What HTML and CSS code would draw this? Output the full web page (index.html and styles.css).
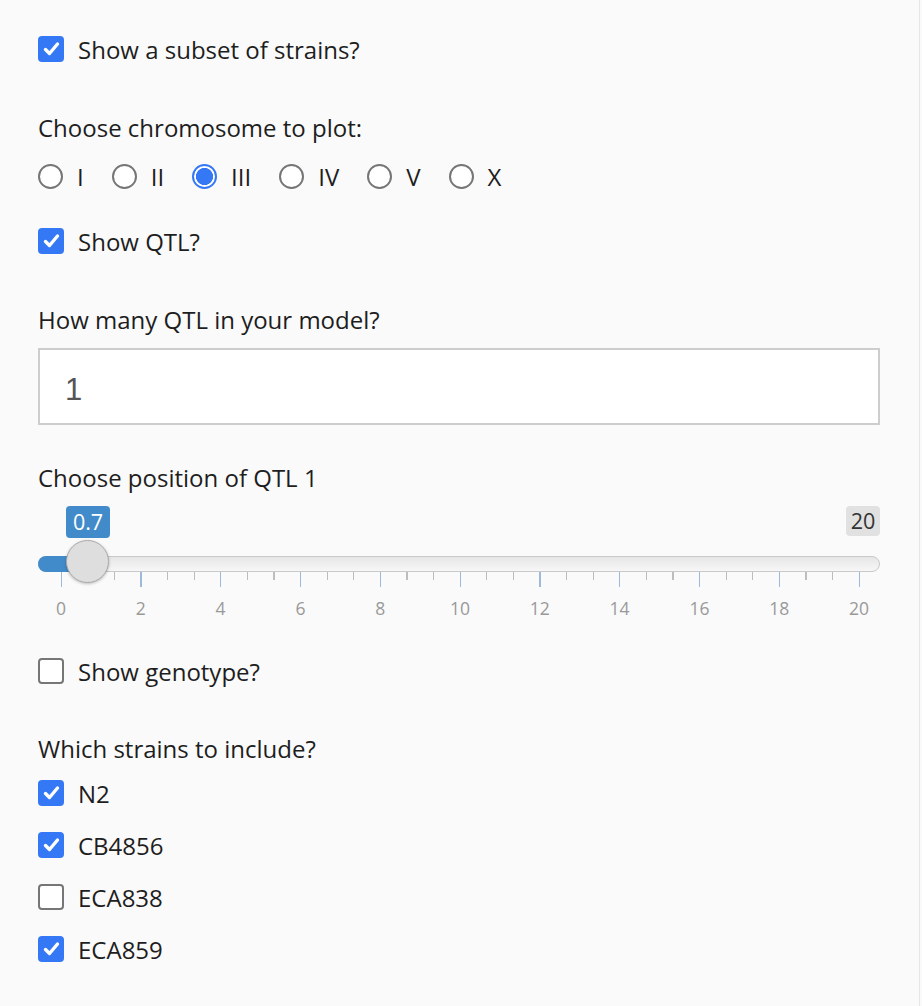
FILE: index.html
```html
<!DOCTYPE html>
<html>
<head>
<meta charset="utf-8">
<title>QTL controls</title>
<link rel="stylesheet" href="styles.css">
</head>
<body>
<div class="panel">
  <label class="check first">
    <span class="box on"><svg viewBox="0 0 26 26" width="26" height="26"><path d="M7.5 13.5 L11.5 17.5 L19.5 8" fill="none" stroke="#fff" stroke-width="3.4" stroke-linecap="round" stroke-linejoin="round"/></svg></span>
    <span class="txt">Show a subset of strains?</span>
  </label>

  <div class="label chrom">Choose chromosome to plot:</div>
  <div class="radios">
    <label class="radio"><span class="circle"></span><span class="txt">I</span></label>
    <label class="radio"><span class="circle"></span><span class="txt">II</span></label>
    <label class="radio"><span class="circle on"></span><span class="txt">III</span></label>
    <label class="radio"><span class="circle"></span><span class="txt">IV</span></label>
    <label class="radio"><span class="circle"></span><span class="txt">V</span></label>
    <label class="radio"><span class="circle"></span><span class="txt">X</span></label>
  </div>

  <label class="check qtl">
    <span class="box on"><svg viewBox="0 0 26 26" width="26" height="26"><path d="M7.5 13.5 L11.5 17.5 L19.5 8" fill="none" stroke="#fff" stroke-width="3.4" stroke-linecap="round" stroke-linejoin="round"/></svg></span>
    <span class="txt">Show QTL?</span>
  </label>

  <div class="label howmany">How many QTL in your model?</div>
  <div class="numinput">1</div>

  <div class="label position">Choose position of QTL 1</div>
  <div class="slider">
    <span class="badge from">0.7</span>
    <span class="badge max">20</span>
    <div class="track"></div>
    <div class="bar"></div>
    <div class="grid">
      <span class="tick major" style="left:22.5px"></span>
      <span class="tick minor" style="left:49.1px"></span>
      <span class="tick minor" style="left:75.7px"></span>
      <span class="tick major" style="left:102.3px"></span>
      <span class="tick minor" style="left:128.9px"></span>
      <span class="tick minor" style="left:155.5px"></span>
      <span class="tick major" style="left:182.1px"></span>
      <span class="tick minor" style="left:208.7px"></span>
      <span class="tick minor" style="left:235.3px"></span>
      <span class="tick major" style="left:261.9px"></span>
      <span class="tick minor" style="left:288.5px"></span>
      <span class="tick minor" style="left:315.1px"></span>
      <span class="tick major" style="left:341.7px"></span>
      <span class="tick minor" style="left:368.3px"></span>
      <span class="tick minor" style="left:394.9px"></span>
      <span class="tick major" style="left:421.5px"></span>
      <span class="tick minor" style="left:448.1px"></span>
      <span class="tick minor" style="left:474.7px"></span>
      <span class="tick major" style="left:501.3px"></span>
      <span class="tick minor" style="left:527.9px"></span>
      <span class="tick minor" style="left:554.5px"></span>
      <span class="tick major" style="left:581.1px"></span>
      <span class="tick minor" style="left:607.7px"></span>
      <span class="tick minor" style="left:634.3px"></span>
      <span class="tick major" style="left:660.9px"></span>
      <span class="tick minor" style="left:687.5px"></span>
      <span class="tick minor" style="left:714.1px"></span>
      <span class="tick major" style="left:740.7px"></span>
      <span class="tick minor" style="left:767.3px"></span>
      <span class="tick minor" style="left:793.9px"></span>
      <span class="tick major" style="left:820.5px"></span>
      <span class="num" style="left:22.5px">0</span>
      <span class="num" style="left:102.3px">2</span>
      <span class="num" style="left:182.1px">4</span>
      <span class="num" style="left:261.9px">6</span>
      <span class="num" style="left:341.7px">8</span>
      <span class="num" style="left:421.5px">10</span>
      <span class="num" style="left:501.3px">12</span>
      <span class="num" style="left:581.1px">14</span>
      <span class="num" style="left:660.9px">16</span>
      <span class="num" style="left:740.7px">18</span>
      <span class="num" style="left:820.5px">20</span>
    </div>
    <div class="handle"></div>
  </div>

  <label class="check geno">
    <span class="box"></span>
    <span class="txt">Show genotype?</span>
  </label>

  <div class="label strains">Which strains to include?</div>
  <div class="strainlist">
    <label class="check">
      <span class="box on"><svg viewBox="0 0 26 26" width="26" height="26"><path d="M7.5 13.5 L11.5 17.5 L19.5 8" fill="none" stroke="#fff" stroke-width="3.4" stroke-linecap="round" stroke-linejoin="round"/></svg></span>
      <span class="txt">N2</span>
    </label>
    <label class="check">
      <span class="box on"><svg viewBox="0 0 26 26" width="26" height="26"><path d="M7.5 13.5 L11.5 17.5 L19.5 8" fill="none" stroke="#fff" stroke-width="3.4" stroke-linecap="round" stroke-linejoin="round"/></svg></span>
      <span class="txt">CB4856</span>
    </label>
    <label class="check">
      <span class="box"></span>
      <span class="txt">ECA838</span>
    </label>
    <label class="check">
      <span class="box on"><svg viewBox="0 0 26 26" width="26" height="26"><path d="M7.5 13.5 L11.5 17.5 L19.5 8" fill="none" stroke="#fff" stroke-width="3.4" stroke-linecap="round" stroke-linejoin="round"/></svg></span>
      <span class="txt">ECA859</span>
    </label>
  </div>
</div>
</body>
</html>
```

FILE: styles.css
```css
html, body {
  margin: 0;
  padding: 0;
  background: #fafafa;
}
body {
  font-family: "Open Sans", "Noto Sans", sans-serif;
  font-size: 24px;
  color: #1e1e1e;
}
.panel {
  box-sizing: border-box;
  width: 920px;
  min-height: 1006px;
  padding: 0 39px 1px 38px;
  background: #fafafa;
  border-right: 1px solid #e6e6e6;
  display: flex;
  flex-direction: column;
}
.check {
  display: flex;
  align-items: flex-start;
  gap: 14px;
  height: 30px;
  line-height: 30px;
}
.box {
  box-sizing: border-box;
  width: 26px;
  height: 26px;
  flex: none;
  border: 2px solid #767676;
  border-radius: 4px;
  background: #fff;
  margin-top: 1px;
  display: block;
}
.box.on {
  border: none;
  background: #3478f6;
}
.box svg { display: block; }
.txt { white-space: nowrap; }
.label {
  height: 30px;
  line-height: 30px;
}
.first { margin-top: 35px; }
.chrom { margin-top: 48px; }
.radios {
  margin-top: 19px;
  display: flex;
  height: 30px;
  line-height: 30px;
}
.radio {
  display: flex;
  align-items: flex-start;
  gap: 14px;
  margin-right: 28px;
}
.circle {
  box-sizing: border-box;
  width: 25px;
  height: 25px;
  margin-top: 2px;
  border: 2px solid #767676;
  border-radius: 50%;
  background: #fff;
  flex: none;
}
.circle.on {
  border-color: #3478f6;
  background: radial-gradient(circle, #3478f6 0 8.3px, #fff 8.8px);
}
.qtl { margin-top: 35px; }
.howmany { margin-top: 48px; }
.numinput {
  box-sizing: border-box;
  margin-top: 13px;
  height: 77px;
  overflow: hidden;
  border: 2px solid #cdcdcd;
  background: #fff;
  padding-left: 25px;
  font-family: "Liberation Sans", Arial, sans-serif;
  font-size: 31px;
  line-height: 79px;
  color: #555;
}
.position { margin-top: 38px; }
.slider {
  position: relative;
  margin-top: 13px;
  height: 114px;
}
.badge {
  position: absolute;
  top: 0;
  height: 32px;
  line-height: 32px;
  font-size: 21.5px;
  text-align: center;
  border-radius: 4px;
}
.badge.from {
  left: 28px;
  width: 44px;
  background: #428bca;
  color: #fff;
}
.badge.max {
  right: 0;
  width: 34px;
  height: 30px;
  line-height: 30px;
  background: #e1e1e1;
  color: #333;
}
.track {
  position: absolute;
  top: 50px;
  left: 0;
  right: 0;
  height: 16px;
  box-sizing: border-box;
  border: 1px solid #c9c9c9;
  border-radius: 8px;
  background: linear-gradient(to bottom, #dedede -50%, #fff 150%);
}
.bar {
  position: absolute;
  top: 50px;
  left: 0;
  width: 52px;
  height: 16px;
  background: #428bca;
  border-radius: 8px 0 0 8px;
}
.handle {
  position: absolute;
  left: 28px;
  top: 34px;
  width: 43px;
  height: 43px;
  box-sizing: border-box;
  border-radius: 50%;
  background: #dedede;
  border: 1.5px solid #ababab;
  box-shadow: 0 1px 3px rgba(0, 0, 0, 0.25);
}
.grid {
  position: absolute;
  left: 0;
  right: 0;
  top: 66px;
  height: 48px;
}
.tick {
  position: absolute;
  top: 0;
  width: 1.3px;
}
.tick.major {
  height: 15px;
  background: #9ebadb;
}
.tick.minor {
  height: 8px;
  background: #bdbdbd;
}
.num {
  position: absolute;
  top: 26px;
  width: 40px;
  margin-left: -19.5px;
  text-align: center;
  font-size: 17.5px;
  line-height: 20px;
  color: #999;
}
.geno { margin-top: 37px; }
.strains { margin-top: 47px; }
.strainlist {
  margin-top: 15px;
  display: flex;
  flex-direction: column;
  gap: 22px;
}
```
